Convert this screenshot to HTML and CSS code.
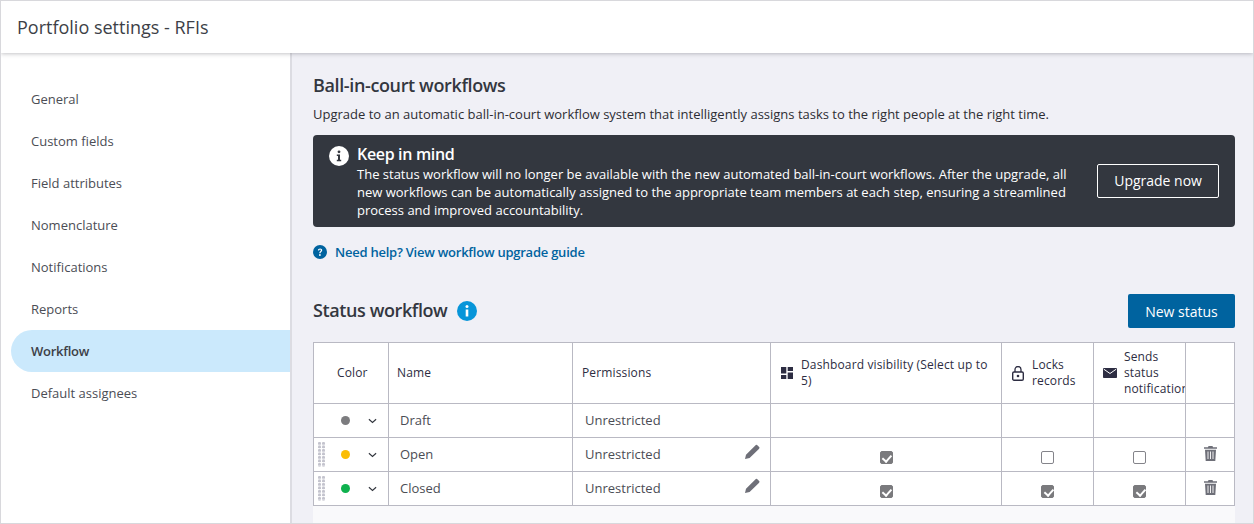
FILE: index.html
```html
<!DOCTYPE html>
<html lang="en">
<head>
<meta charset="utf-8">
<title>Portfolio settings - RFIs</title>
<link rel="stylesheet" href="styles.css">
</head>
<body>
<div class="frame">
  <header class="topbar"><h1 class="page-title">Portfolio settings - RFIs</h1></header>
  <div class="layout">
    <nav class="sidebar">
      <a class="nav-item">General</a>
      <a class="nav-item">Custom fields</a>
      <a class="nav-item">Field attributes</a>
      <a class="nav-item">Nomenclature</a>
      <a class="nav-item">Notifications</a>
      <a class="nav-item">Reports</a>
      <a class="nav-item active">Workflow</a>
      <a class="nav-item">Default assignees</a>
    </nav>
    <main class="main">
      <h2 class="section-title">Ball-in-court workflows</h2>
      <p class="intro">Upgrade to an automatic ball-in-court workflow system that intelligently assigns tasks to the right people at the right time.</p>
      <section class="banner">
        <svg class="banner-icon" viewBox="0 0 20 20" width="20" height="20"><circle cx="10" cy="10" r="10" fill="#fff"/><circle cx="10" cy="5.800" r="1.400" fill="#33373f"/><path d="M7.800 8.600h3.200v5.200h1.200v1.500H7.800v-1.500H9v-3.700H7.800z" fill="#33373f"/></svg>
        <div class="banner-text">
          <div class="banner-title">Keep in mind</div>
          <div class="banner-body">The status workflow will no longer be available with the new automated ball-in-court workflows. After the upgrade, all new workflows can be automatically assigned to the appropriate team members at each step, ensuring a streamlined process and improved accountability.</div>
        </div>
        <button class="btn-outline">Upgrade now</button>
      </section>
      <a class="help-link">
        <svg viewBox="0 0 14 14" width="14" height="14"><circle cx="7" cy="7" r="7" fill="#00639f"/><path d="M4.900 5.400C5 4.200 5.900 3.500 7.100 3.500c1.200 0 2.100.7 2.100 1.800 0 1.700-1.700 1.600-1.700 3H6.300c0-2 1.600-2 1.600-3 0-.5-.3-.8-.8-.8s-.9.3-1 .9z" fill="#fff"/><circle cx="6.900" cy="10" r=".9" fill="#fff"/></svg>
        <span>Need help? View workflow upgrade guide</span>
      </a>
      <div class="status-head">
        <h2 class="section-title raised">Status workflow</h2>
        <svg class="info" viewBox="0 0 20 20" width="20" height="20"><circle cx="10" cy="10" r="10" fill="#0795d9"/><circle cx="10" cy="5.600" r="1.500" fill="#fff"/><rect x="8.700" y="8.500" width="2.600" height="7" fill="#fff"/></svg>
        <button class="btn-primary">New status</button>
      </div>
      <table class="grid">
        <colgroup><col class="c1"><col class="c2"><col class="c3"><col class="c4"><col class="c5"><col class="c6"><col class="c7"></colgroup>
        <thead>
          <tr>
            <th class="th-color">Color</th>
            <th>Name</th>
            <th>Permissions</th>
            <th class="th-dash"><div class="th-icon"><svg viewBox="0 0 12 12" width="12" height="12"><path d="M0 0h5.300v6.500H0zM6.700 0H12v4H6.700zM6.700 5.400H12V12H6.700zM0 7.900h5.300V12H0z" fill="#2d2d42"/></svg><span>Dashboard visibility (Select up to 5)</span></div></th>
            <th class="th-lock"><div class="th-icon"><svg viewBox="0 0 12 15" width="12" height="15"><path d="M3 6V3.500a3 3 0 0 1 6 0V6" fill="none" stroke="#2d2d42" stroke-width="1.300"/><rect x=".7" y="6" width="10.600" height="8.200" rx="1.300" fill="none" stroke="#2d2d42" stroke-width="1.400"/><circle cx="6" cy="10" r="1.300" fill="#2d2d42"/></svg><span>Locks records</span></div></th>
            <th class="th-clip"><div class="th-icon"><svg viewBox="0 0 14 10" width="14" height="10"><rect width="14" height="10" rx=".8" fill="#2d2d42"/><path d="M.8 1.200 7 5.500l6.200-4.300" fill="none" stroke="#fff" stroke-width="1"/></svg><span class="clip">Sends status notifications</span></div></th>
            <th></th>
          </tr>
        </thead>
        <tbody>
          <tr>
            <td><div class="color-cell"><span class="dot gray"></span><svg class="chev" viewBox="0 0 10 6" width="9" height="6"><path d="M1 1l4 3.500L9 1" fill="none" stroke="#33373f" stroke-width="1.300"/></svg></div></td>
            <td class="name">Draft</td>
            <td class="perm"><div class="perm-row"><span>Unrestricted</span></div></td>
            <td></td><td></td><td></td><td></td>
          </tr>
          <tr>
            <td><div class="color-cell"><span class="grip"></span><span class="dot yellow"></span><svg class="chev" viewBox="0 0 10 6" width="9" height="6"><path d="M1 1l4 3.500L9 1" fill="none" stroke="#33373f" stroke-width="1.300"/></svg></div></td>
            <td class="name">Open</td>
            <td class="perm"><div class="perm-row"><span>Unrestricted</span><svg class="pencil" viewBox="0 0 15 15" width="15" height="15"><path d="M0 15l1-4.300L10.300 1.400a1.600 1.600 0 0 1 2.300 0l1.300 1.300a1.600 1.600 0 0 1 0 2.300L4.600 14z" fill="#6e6f78"/></svg></div></td>
            <td class="check-cell"><span class="cb on"></span></td>
            <td class="check-cell"><span class="cb"></span></td>
            <td class="check-cell"><span class="cb"></span></td>
            <td class="trash-cell"><svg viewBox="0 0 13 15" width="13" height="15"><path d="M4.500 0h4l.5 1.300h4v1.400H0V1.300h4zM1 3.700h11l-.7 11.300H1.700z" fill="#6e6f78"/><path d="M4 5.500v7.500M6.500 5.500v7.500M9 5.500v7.500" stroke="#fff" stroke-width=".9"/></svg></td>
          </tr>
          <tr>
            <td><div class="color-cell"><span class="grip"></span><span class="dot green"></span><svg class="chev" viewBox="0 0 10 6" width="9" height="6"><path d="M1 1l4 3.500L9 1" fill="none" stroke="#33373f" stroke-width="1.300"/></svg></div></td>
            <td class="name">Closed</td>
            <td class="perm"><div class="perm-row"><span>Unrestricted</span><svg class="pencil" viewBox="0 0 15 15" width="15" height="15"><path d="M0 15l1-4.300L10.300 1.400a1.600 1.600 0 0 1 2.300 0l1.300 1.300a1.600 1.600 0 0 1 0 2.300L4.600 14z" fill="#6e6f78"/></svg></div></td>
            <td class="check-cell"><span class="cb on"></span></td>
            <td class="check-cell"><span class="cb on"></span></td>
            <td class="check-cell"><span class="cb on"></span></td>
            <td class="trash-cell"><svg viewBox="0 0 13 15" width="13" height="15"><path d="M4.500 0h4l.5 1.300h4v1.400H0V1.300h4zM1 3.700h11l-.7 11.300H1.700z" fill="#6e6f78"/><path d="M4 5.500v7.500M6.500 5.500v7.500M9 5.500v7.500" stroke="#fff" stroke-width=".9"/></svg></td>
          </tr>
        </tbody>
      </table>
      <div class="table-foot"></div>
    </main>
  </div>
</div>
</body>
</html>
```
FILE: styles.css
```css
* { box-sizing: border-box; }
html, body { margin: 0; padding: 0; }
body { font-family: "Open Sans", sans-serif; color: #33373f; overflow: hidden; }
.frame { width: 1254px; height: 524px; border: 1px solid #d8d8dc; display: flex; flex-direction: column; overflow: hidden; background: #fff; }
.topbar { height: 52px; flex: none; background: #fff; display: flex; align-items: center; padding-left: 16px; box-shadow: 0 1px 4px rgba(60,60,70,.3); position: relative; z-index: 2; }
.page-title { margin: 0; font-size: 18px; font-weight: 400; color: #3d3f47; }
.layout { flex: 1; display: flex; min-height: 0; }
.sidebar { width: 291px; flex: none; background: #fff; border-right: 2px solid #dcdce2; padding: 25px 0 0 10px; }
.nav-item { display: flex; align-items: center; height: 42px; padding-left: 20px; font-size: 13px; color: #4b4d55; border-radius: 21px 0 0 21px; }
.nav-item.active { background: #cbe9fc; font-weight: 600; color: #3d3f47; letter-spacing: -.25px; }
.main { flex: 1; background: #f0f0f6; padding: 20px 18px 0 21px; min-width: 0; }
.section-title { margin: 0; font-size: 18px; font-weight: 600; color: #33373f; line-height: 24px; letter-spacing: -.37px; }
.section-title.raised { margin-bottom: 2px; letter-spacing: -.4px; }
.intro { margin: 8px 0 0; font-size: 13px; line-height: 18px; color: #2d2d33; }
.banner { margin-top: 12px; height: 92px; background: #33373f; border-radius: 4px; display: flex; padding: 10px 16px 0 16px; color: #fff; }
.banner-icon { flex: none; margin-top: 1px; }
.banner-text { width: 716px; margin-left: 8px; }
.banner-title { font-size: 16px; font-weight: 600; line-height: 18px; margin-bottom: 2px; letter-spacing: -.33px; }
.banner-body { font-size: 13px; line-height: 18px; }
.btn-outline { margin: 19px 0 0 25px; width: 122px; height: 34px; background: transparent; border: 1px solid #fff; border-radius: 2px; color: #fff; font: 400 14px/18px "Open Sans", sans-serif; padding: 0; }
.help-link { display: flex; align-items: center; gap: 8px; margin-top: 16px; height: 18px; font-size: 13px; font-weight: 600; color: #00639f; letter-spacing: -.24px; }
.status-head { display: flex; align-items: center; margin-top: 33px; height: 34px; }
.info { margin-left: 10px; }
.btn-primary { margin-left: auto; width: 107px; height: 34px; background: #00639f; color: #fff; border: 0; border-radius: 2px; font: 400 14px "Open Sans", sans-serif; padding: 0; }
.grid { margin-top: 14px; width: 921px; table-layout: fixed; border-collapse: collapse; background: #fff; font-size: 13px; }
.grid th, .grid td { border: 1px solid #b9b9c3; padding: 0; }
.c1 { width: 75px; } .c2 { width: 184px; } .c3 { width: 198px; } .c4 { width: 231px; } .c5 { width: 92px; } .c6 { width: 92px; } .c7 { width: 49px; }
.grid thead tr { height: 61px; }
.grid tbody tr { height: 34px; }
.grid th { font-size: 12px; font-weight: 400; text-align: left; padding-left: 8px; line-height: 16px; color: #2d2d42; letter-spacing: .14px; }
.grid th:nth-child(3) { padding-left: 9px; }
.grid th.th-color { padding-left: 23px; }
.grid th.th-dash { padding-left: 10px; padding-right: 8px; }
.grid th.th-lock { padding-left: 10px; }
.grid th.th-clip { padding-left: 9px; }
.th-clip { overflow: hidden; }
.th-icon { display: flex; align-items: center; gap: 8px; }
.th-clip .th-icon { gap: 7px; }
.th-icon svg { flex: none; }
.clip { display: block; }
.color-cell { display: flex; align-items: center; height: 33px; padding-left: 27px; position: relative; }
.dot { width: 9px; height: 9px; border-radius: 50%; }
.gray { background: #7c7c7f; } .yellow { background: #fbbd05; } .green { background: #0fb14e; }
.chev { margin-left: 18px; }
.grip { position: absolute; left: 4px; top: 4px; width: 8px; height: 25px; background-image: radial-gradient(circle at 1.500px 1.500px, #c4c4ce 1.400px, transparent 1.600px); background-size: 4px 3.500px; }
.name { padding-left: 11px !important; padding-bottom: 2px !important; color: #4b4d55; }
.perm { padding: 0 10px 2px 12px !important; color: #4b4d55; }
.perm-row { display: flex; align-items: center; justify-content: space-between; }
.pencil { margin-top: -4px; }
.check-cell { text-align: center; }
.cb { display: inline-block; width: 13px; height: 13px; border: 1px solid #84848a; border-radius: 2px; background: #fff; vertical-align: middle; margin-top: 3px; position: relative; }
.cb.on { background: #7a7a7d; border-color: #7a7a7d; }
.cb.on::after { content: ""; position: absolute; left: 3.500px; top: 1px; width: 3.500px; height: 7px; border: solid #fff; border-width: 0 2px 2px 0; transform: rotate(42deg); }
.trash-cell { text-align: center; }
.trash-cell svg { display: block; margin: -3px auto 0 18px; }
.table-foot { height: 20px; width: 922px; background: #f9f9fb; }
```
